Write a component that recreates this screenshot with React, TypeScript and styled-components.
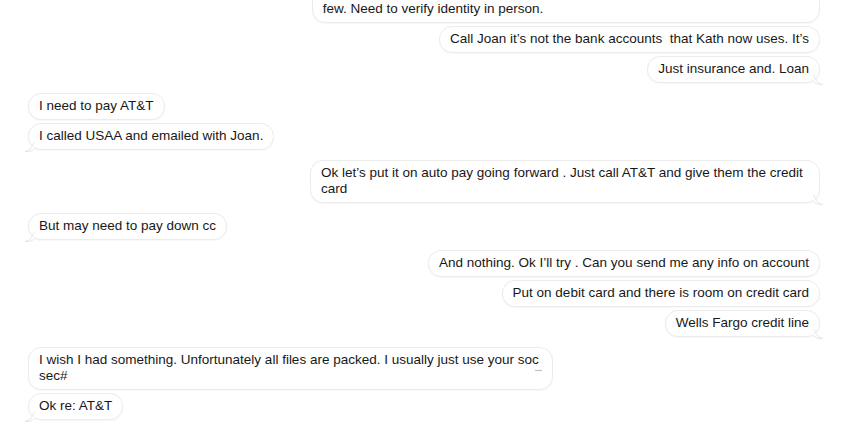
import React from 'react'
import styled, { createGlobalStyle } from 'styled-components'

const GlobalStyle = createGlobalStyle`
  html, body {
    margin: 0;
    padding: 0;
    background: #ffffff;
    overflow: hidden;
  }
  body {
    font-family: 'Liberation Sans', Arial, sans-serif;
  }
`

const Thread = styled.div`
  display: flex;
  flex-direction: column;
  padding: 0 28px;
  margin-top: -20px;
  width: 848px;
  box-sizing: border-box;
`

const Group = styled.div<{ $mine?: boolean }>`
  display: flex;
  flex-direction: column;
  align-items: ${(p) => (p.$mine ? 'flex-end' : 'flex-start')};
  gap: 3px;
  margin-bottom: 10px;
`

const Bubble = styled.div<{ $max?: number }>`
  position: relative;
  max-width: ${(p) => p.$max ?? 510}px;
  box-sizing: border-box;
  padding: 4px 10px 5px;
  font-size: 13.5px;
  line-height: 16px;
  color: #181818;
  background: #ffffff;
  border: 1px solid #ebebeb;
  border-radius: 13px;
  box-shadow: 0 1px 1px rgba(0, 0, 0, 0.03);
  white-space: pre-wrap;
`

const FirstLine = styled.span`
  display: block;
  white-space: nowrap;
`

const Tail = styled.svg<{ $mine?: boolean }>`
  position: absolute;
  bottom: -3px;
  ${(p) => (p.$mine ? 'right: -5px;' : 'left: -5px; transform: scaleX(-1);')}
  width: 10px;
  height: 10px;
  overflow: visible;
`

const Mark = styled.span`
  position: absolute;
  right: 10px;
  top: 22px;
  width: 7px;
  height: 1px;
  background: #bdbdbd;
`

type Msg = { text: string; lead?: string; tail?: boolean; mark?: boolean; max?: number }

const thread: { mine: boolean; msgs: Msg[] }[] = [
  {
    mine: true,
    msgs: [
      {
        lead: 'They said there are only a couple of the old accounts still open in her name and a',
        text: 'few. Need to verify identity in person.',
        max: 520,
      },
      { text: 'Call Joan it\u2019s not the bank accounts  that Kath now uses. It\u2019s' },
      { text: 'Just insurance and. Loan', tail: true },
    ],
  },
  {
    mine: false,
    msgs: [
      { text: 'I need to pay AT&T' },
      { text: 'I called USAA and emailed with Joan.', tail: true },
    ],
  },
  {
    mine: true,
    msgs: [
      {
        text: 'Ok let\u2019s put it on auto pay going forward . Just call AT&T and give them the credit card',
        tail: true,
      },
    ],
  },
  {
    mine: false,
    msgs: [{ text: 'But may need to pay down cc', tail: true }],
  },
  {
    mine: true,
    msgs: [
      { text: 'And nothing. Ok I\u2019ll try . Can you send me any info on account' },
      { text: 'Put on debit card and there is room on credit card' },
      { text: 'Wells Fargo credit line', tail: true },
    ],
  },
  {
    mine: false,
    msgs: [
      {
        text: 'I wish I had something. Unfortunately all files are packed. I usually just use your soc sec#',
        mark: true,
        max: 525,
      },
      { text: 'Ok re: AT&T', tail: true },
    ],
  },
]

const Message = ({ msg, mine }: { msg: Msg; mine: boolean }) => (
  <Bubble $max={msg.max}>
    {msg.lead && <FirstLine>{msg.lead}</FirstLine>}
    {msg.text}
    {msg.mark && <Mark />}
    {msg.tail && (
      <Tail $mine={mine} viewBox="0 0 10 10">
        <path d="M0 0 C1 4 3 8 9 9.5 C5 9.8 2 9 0 7" fill="#ffffff" stroke="#e6e6e6" strokeWidth="1" />
      </Tail>
    )}
  </Bubble>
)

const App = () => {
  return (
    <>
      <GlobalStyle />
      <Thread>
        {thread.map((g, i) => (
          <Group key={i} $mine={g.mine}>
            {g.msgs.map((m, j) => (
              <Message key={j} msg={m} mine={g.mine} />
            ))}
          </Group>
        ))}
      </Thread>
    </>
  )
}

export default App
